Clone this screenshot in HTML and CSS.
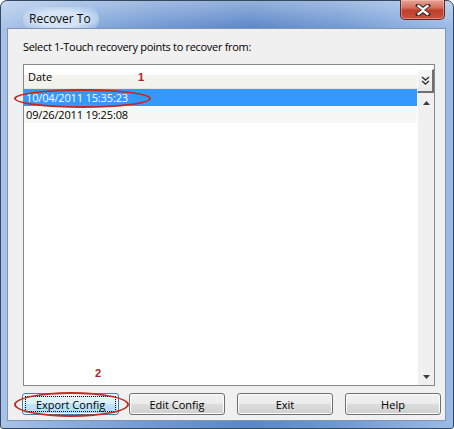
FILE: index.html
```html
<!DOCTYPE html>
<html>
<head>
<meta charset="utf-8">
<link rel="stylesheet" href="styles.css">
</head>
<body>
<div class="window">
  <div class="titlebar">
    <div class="title"><span class="title-text">Recover To</span></div>
    <div class="close">
      <svg width="20" height="12" viewBox="0 0 20 12">
        <path d="M5 1.5 L10 5 L15 1.5 M5 10.5 L10 7 L15 10.5" stroke="#3a2a2a" stroke-width="4.2" fill="none" stroke-linecap="square"/>
        <path d="M5.5 2 L10 5.3 L14.5 2 M5.5 10 L10 6.7 L14.5 10 M10 5.3 L10 6.7" stroke="#ffffff" stroke-width="2.2" fill="none" stroke-linecap="square"/>
      </svg>
    </div>
  </div>
  <div class="client">
    <div class="label">Select 1-Touch recovery points to recover from:</div>
    <div class="listview">
      <div class="lv-main">
        <div class="lv-header">
          <div class="col-date">Date</div>
        </div>
        <div class="row selected">10/04/2011 15:35:23</div>
        <div class="row alt">09/26/2011 19:25:08</div>
      </div>
      <div class="lv-side">
        <div class="hdr-btn">
          <svg width="9" height="10" viewBox="0 0 9 10">
            <path d="M1 1 L4.5 4 L8 1 M1 5 L4.5 8 L8 5" stroke="#333" stroke-width="1.4" fill="none"/>
          </svg>
        </div>
        <div class="scrollbar">
          <svg class="arrow" width="9" height="5" viewBox="0 0 9 5"><path d="M1 5 L4.5 1 L8 5 Z" fill="#3c3c3c"/></svg>
          <svg class="arrow" width="9" height="5" viewBox="0 0 9 5"><path d="M1 0 L4.5 4 L8 0 Z" fill="#3c3c3c"/></svg>
        </div>
      </div>
    </div>
    <div class="buttons">
      <button class="btn focused"><span class="focus">Export Config</span></button>
      <button class="btn">Edit Config</button>
      <button class="btn">Exit</button>
      <button class="btn">Help</button>
    </div>
    <div class="mark num1">1</div>
    <div class="mark num2">2</div>
    <div class="ring ring1"></div>
    <div class="ring ring2"></div>
  </div>
</div>
</body>
</html>
```

FILE: styles.css
```css
* { box-sizing: border-box; }
html, body { margin: 0; padding: 0; width: 454px; height: 429px; overflow: hidden; background: #ffffff; }
body { font-family: "Liberation Sans", Arial, sans-serif; font-size: 11px; color: #000; }

.window {
  width: 454px;
  height: 429px;
  border: 1px solid #34495f;
  border-radius: 7px 7px 3px 3px;
  background:
    linear-gradient(180deg, rgba(255,255,255,0.35) 0px, rgba(255,255,255,0) 28px),
    linear-gradient(90deg, #a9c3e8 0%, #8aaedf 15%, #6f97d3 35%, #5b86c9 55%, #7099d3 75%, #9bbbe6 100%);
  display: flex;
  flex-direction: column;
  padding: 0 7px 7px 6px;
  position: relative;
}

.titlebar {
  height: 27px;
  display: flex;
  justify-content: space-between;
  align-items: flex-start;
}
.title {
  margin-left: 16px;
  margin-top: 6px;
  padding: 3px 8px 4px 6px;
  border-radius: 12px;
  background: radial-gradient(ellipse at center, rgba(220,232,248,0.9) 45%, rgba(200,218,242,0.5) 75%, rgba(180,205,240,0) 100%);
  font-family: "Open Sans", "Liberation Sans", sans-serif;
  font-size: 12px;
  color: #0c0c0c;
}
.close {
  width: 45px;
  height: 20px;
  margin-top: -1px;
  margin-right: 1px;
  border: 1px solid #5e2a22;
  border-top: none;
  border-radius: 0 0 5px 5px;
  background: linear-gradient(180deg, #e8a598 0%, #d4705e 40%, #be3e2b 55%, #c7553f 100%);
  box-shadow: inset 0 0 0 1px rgba(255,200,190,0.45);
  display: flex;
  align-items: center;
  justify-content: center;
}

.client {
  flex: 1;
  background: #f0f0f0;
  border: 1px solid #8295b0;
  position: relative;
  padding: 11px 10px 0 15px;
  display: flex;
  flex-direction: column;
}
.label {
  height: 24px;
  line-height: 14px;
  font-family: "Open Sans", "Liberation Sans", sans-serif;
  font-size: 11px;
  letter-spacing: -0.3px;
}

.listview {
  width: 412px;
  height: 322px;
  border: 1px solid #828790;
  background: #ffffff;
  display: flex;
}
.lv-main { flex: 1; display: flex; flex-direction: column; }
.lv-header {
  height: 24px;
  background: linear-gradient(180deg, #ffffff 0%, #ffffff 40%, #f4f4ef 45%, #f2f2ec 100%);
  border-bottom: 1px solid #e5e5e0;
  display: flex;
  align-items: center;
  padding-left: 4px;
  font-family: "Open Sans", "Liberation Sans", sans-serif;
}
.row {
  height: 17px;
  line-height: 17px;
  padding-left: 2px;
  font-family: "Open Sans", "Liberation Sans", sans-serif;
  font-size: 11px;
  letter-spacing: -0.15px;
}
.row.selected { background: #3399ff; color: #ffffff; }
.row.alt { background: #f7f7f3; }

.lv-side { width: 17px; display: flex; flex-direction: column; }
.hdr-btn {
  height: 24px;
  margin-top: 4px;
  background: linear-gradient(180deg, #f6f6f6, #e8e8e8);
  border-right: 2px solid #6f6f6f;
  border-bottom: 2px solid #6f6f6f;
  border-top: 1px solid #ffffff;
  border-left: 1px solid #ffffff;
  display: flex;
  align-items: center;
  justify-content: center;
}
.scrollbar {
  flex: 1;
  background: #f0f0f0;
  border-left: 1px solid #ffffff;
  display: flex;
  flex-direction: column;
  justify-content: space-between;
  align-items: center;
  padding: 7px 0 5px;
}

.buttons {
  margin-top: 7px;
  margin-left: -1px;
  display: flex;
  gap: 10px;
}
.btn {
  flex: 0 0 96px;
  width: 96px;
  height: 22px;
  border: 1px solid #707070;
  border-radius: 3px;
  background: linear-gradient(180deg, #f2f2f2 0%, #ebebeb 48%, #dddddd 52%, #cfcfcf 100%);
  box-shadow: inset 0 0 0 1px #fcfcfc;
  font-family: "Open Sans", "Liberation Sans", sans-serif;
  font-size: 11px;
  color: #000;
  padding: 0;
  display: flex;
  align-items: center;
  justify-content: center;
}
.btn.focused {
  flex: 0 0 97px;
  width: 97px;
  border-color: #3c7fb1;
  background: linear-gradient(180deg, #eaf6fd 0%, #d9f0fc 48%, #bee6fd 52%, #a7d9f5 100%);
  box-shadow: inset 0 0 0 1px #f4fbff;
  padding: 2px;
}
.focus {
  flex: 1;
  align-self: stretch;
  border: 1px dotted #000;
  display: flex;
  align-items: center;
  justify-content: center;
}
.buttons .btn:nth-child(2) { margin-left: 0; }
.buttons .btn:nth-child(3) { margin-left: 2px; }
.buttons .btn:nth-child(4) { margin-left: 2px; }

.mark {
  position: absolute;
  color: #b02020;
  font-family: "Liberation Sans", Arial, sans-serif;
  font-size: 11px;
  font-weight: bold;
}
.num1 { left: 130px; top: 42px; }
.num2 { left: 87px; top: 338px; }
.ring {
  position: absolute;
  border: 2px solid #c02a22;
  border-radius: 50%;
}
.ring1 { left: 6px; top: 60px; width: 137px; height: 19px; }
.ring2 { left: 6px; top: 363px; width: 115px; height: 25px; }
```
